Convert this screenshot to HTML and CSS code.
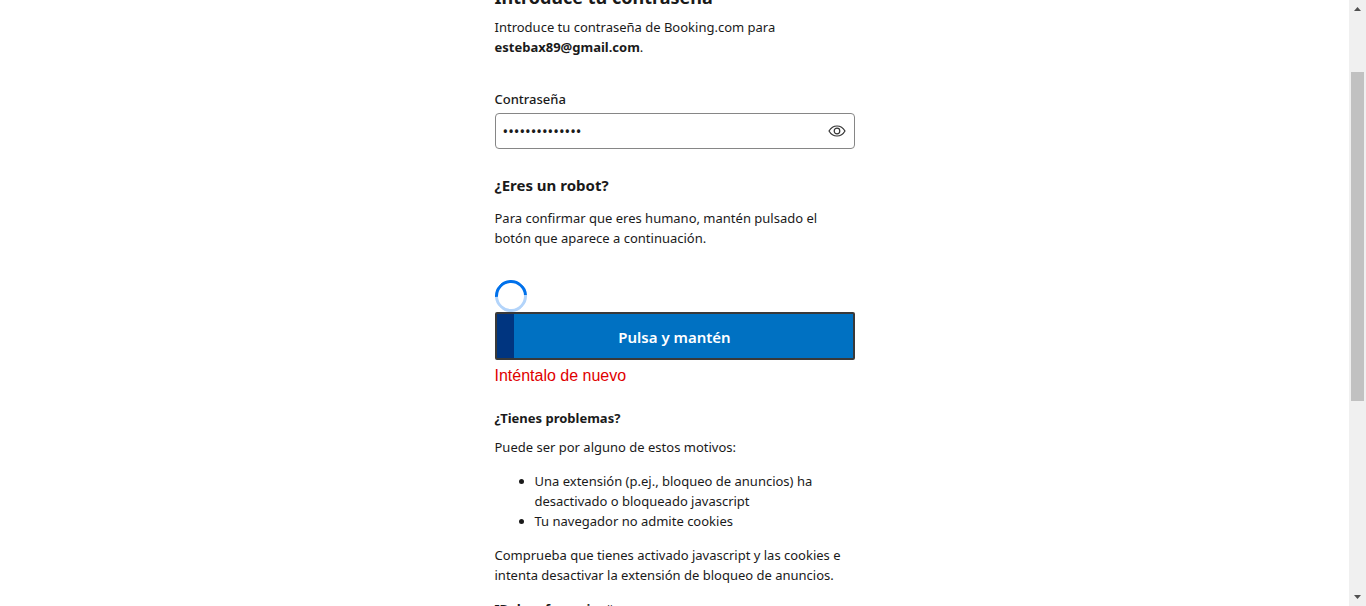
FILE: index.html
```html
<!DOCTYPE html>
<html lang="es">
<head>
<meta charset="utf-8">
<title>Introduce tu contraseña</title>
<link rel="stylesheet" href="styles.css">
</head>
<body>
<div class="viewport">
  <main class="page">
    <form class="panel">
      <h1 class="title">Introduce tu contraseña</h1>
      <p class="text">Introduce tu contraseña de Booking.com para <strong class="email">estebax89@gmail.com</strong>.</p>
      <label class="label" for="password">Contraseña</label>
      <div class="field">
        <input class="input" id="password" type="password" value="contrasena1234">
        <button class="reveal" type="button" aria-label="Mostrar contraseña">
          <svg class="eye" viewBox="0 0 18 12" fill="none" stroke="#333" stroke-width="1.2" aria-hidden="true">
            <path d="M1 6C3 2.600 5.700 1 9 1s6 1.600 8 5c-2 3.400-4.700 5-8 5S3 9.400 1 6Z"/>
            <circle cx="9" cy="6" r="2.800"/>
          </svg>
        </button>
      </div>
      <h2 class="subtitle">¿Eres un robot?</h2>
      <p class="text">Para confirmar que eres humano, mantén pulsado el botón que aparece a continuación.</p>
      <div class="spinner"></div>
      <button class="hold" type="button">Pulsa y mantén</button>
      <p class="error">Inténtalo de nuevo</p>
      <h3 class="help-title">¿Tienes problemas?</h3>
      <p class="text">Puede ser por alguno de estos motivos:</p>
      <ul class="reasons">
        <li>Una extensión (p.ej., bloqueo de anuncios) ha desactivado o bloqueado javascript</li>
        <li>Tu navegador no admite cookies</li>
      </ul>
      <p class="text">Comprueba que tienes activado javascript y las cookies e intenta desactivar la extensión de bloqueo de anuncios.</p>
      <p class="reference"><strong>ID de referencia:</strong> #</p>
    </form>
  </main>
  <div class="scrollbar">
    <svg class="arrow" viewBox="0 0 7 4" aria-hidden="true"><path fill="#505050" d="M0 4 3.500 0 7 4Z"/></svg>
    <div class="track"><div class="thumb"></div></div>
    <svg class="arrow" viewBox="0 0 7 4" aria-hidden="true"><path fill="#505050" d="M0 0h7L3.500 4Z"/></svg>
  </div>
</div>
</body>
</html>
```
FILE: styles.css
```css
* {
  box-sizing: border-box;
}

body {
  margin: 0;
  background: #fff;
  color: #1a1a1a;
  font: 13px/20px "Segoe UI", "Noto Sans", "Open Sans", sans-serif;
}

.viewport {
  display: flex;
  height: 100vh;
  overflow: hidden;
}

.page {
  flex: 1;
  overflow: hidden;
}

.panel {
  width: 360px;
  max-width: 100%;
  margin: -15px auto 0;
}

.title {
  margin: 0 0 8px;
  font-size: 18px;
  line-height: 24px;
}

.text {
  margin: 0;
}

.email,
.reference strong {
  font-weight: 700;
}

.label {
  display: block;
  margin: 32px 0 4px;
  font-weight: 500;
}

.field {
  display: flex;
  align-items: center;
  height: 36px;
  border: 1px solid #868686;
  border-radius: 4px;
}

.input {
  flex: 1;
  min-width: 0;
  padding: 0 7px;
  border: 0;
  outline: 0;
  background: none;
  color: #1a1a1a;
  font: inherit;
  font-size: 15px;
}

.reveal {
  display: flex;
  padding: 8px;
  border: 0;
  background: none;
}

.eye {
  width: 18px;
  height: 12px;
}

.subtitle {
  margin: 24px 0 11px;
  font-size: 15px;
  line-height: 24px;
}

.spinner {
  width: 32px;
  height: 32px;
  margin-top: 32px;
  border: 3px solid #b3d4fa;
  border-top-color: #0071eb;
  border-left-color: #0071eb;
  border-radius: 50%;
  transform: rotate(42deg);
}

.hold {
  display: block;
  width: 100%;
  height: 48px;
  padding: 2px 6px 0;
  border: 2px solid #393939;
  border-radius: 2px;
  background: linear-gradient(90deg, #003580 17px, #0071c2 17px);
  color: #fff;
  font: 600 15px/24px "Segoe UI", "Noto Sans", "Open Sans", sans-serif;
}

.error {
  margin: 6px 0 22px;
  color: #e00000;
  font: 16px/20px "Liberation Sans", Arial, sans-serif;
}

.help-title {
  margin: 0 0 9px;
  font-size: 13px;
  line-height: 20px;
}

.reasons {
  margin: 14px 0;
  padding-left: 40px;
}

.reference {
  margin: 14px 0 0;
}

.scrollbar {
  display: flex;
  flex-direction: column;
  align-items: center;
  gap: 8px;
  width: 17px;
  padding: 7px 0;
  background: #f0f0f0;
}

.arrow {
  width: 7px;
  height: 4px;
}

.track {
  flex: 1;
  width: 13px;
}

.thumb {
  height: 58%;
  margin-top: 53px;
  background: #c1c1c1;
}
```
